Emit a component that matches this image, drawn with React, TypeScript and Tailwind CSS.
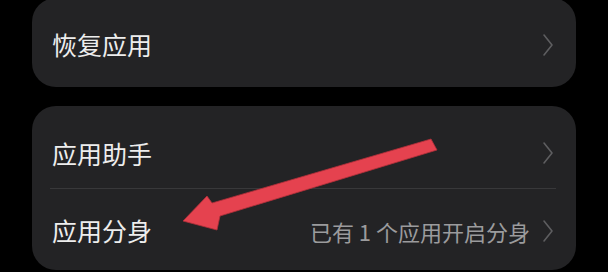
import * as React from "react";

function Chevron() {
  return (
    <svg width="12" height="24" viewBox="0 0 12 24" fill="none" className="shrink-0">
      <path d="M2 2 L10 12 L2 22" stroke="#5e5e60" strokeWidth="1.6" strokeLinecap="round" strokeLinejoin="round" />
    </svg>
  );
}

function Row({ title, value, className }: { title: string; value?: string; className?: string }) {
  return (
    <div className={"flex items-center pl-5 pr-[22px] " + (className ?? "")}>
      <span className="flex-1 text-[25px] text-[#ededed] leading-none">{title}</span>
      {value ? <span className="mr-[12px] text-[22px] text-[#9b9b9d] leading-none">{value}</span> : null}
      <Chevron />
    </div>
  );
}

export default function App() {
  return (
    <div
      className="relative h-[272px] w-[608px] overflow-hidden bg-black px-8"
      style={{ fontFamily: '"Noto Sans CJK SC", "Noto Sans", sans-serif' }}
    >
      <div className="-mt-[2px] rounded-[24px] bg-[#232325]">
        <Row title="恢复应用" className="h-[89px] pt-[4px]" />
      </div>
      <div className="mt-[19px] rounded-[24px] bg-[#232325]">
        <Row title="应用助手" className="h-[82px] pt-[12px]" />
        <div className="ml-[18px] mr-5 h-px bg-[#38383a]" />
        <Row title="应用分身" value="已有 1 个应用开启分身" className="h-[81px] pt-[2px]" />
      </div>
      <svg className="pointer-events-none absolute left-0 top-0" width="608" height="272" viewBox="0 0 608 272">
        <polygon
          points="183,221 207,196 212,203 431,139 437,150 220,216 217,230"
          fill="#e5424f"
          stroke="#b0303a"
          strokeWidth="0.8"
          strokeLinejoin="round"
        />
      </svg>
    </div>
  );
}
